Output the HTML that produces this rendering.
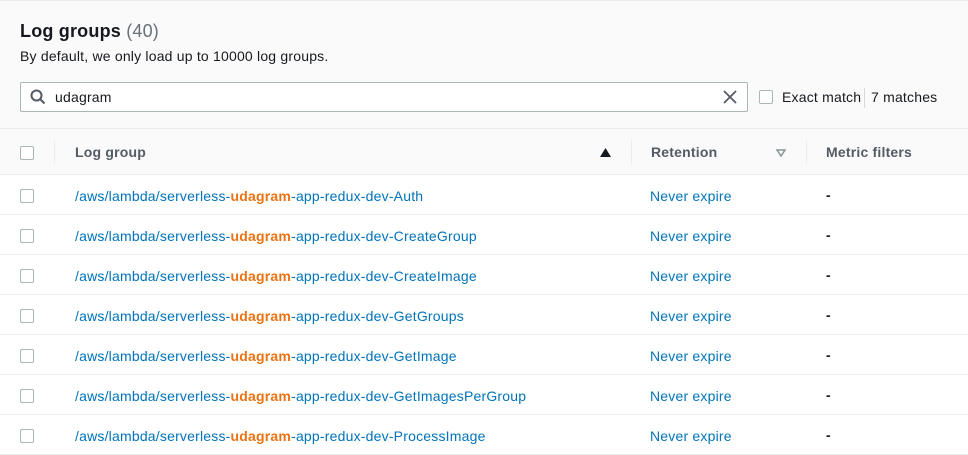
<!DOCTYPE html>
<html><head><meta charset="utf-8"><style>
*{box-sizing:border-box;margin:0;padding:0}
body{width:968px;height:454px;overflow:hidden;background:#fff;font-family:"Liberation Sans",Arial,sans-serif;color:#16191f;position:relative;letter-spacing:0.2px}
.top{position:absolute;left:0;top:0;width:968px;height:175px;background:#fafafa;border-top:1px solid #eaeded}
.abs{position:absolute;white-space:nowrap}
.title{left:20px;top:21px;font-size:18px;font-weight:bold}
.title span{font-weight:normal;color:#687078}
.sub{left:20px;top:48px;font-size:14px}
.search{left:20px;top:82px;width:728px;height:30px;background:#fff;border:1px solid #aab7b8;border-radius:2px}
.cb{width:14px;height:14px;border:1px solid #aab7b8;border-radius:2px;background:#fff;position:absolute}
.hline{position:absolute;left:0;width:968px;height:1px;background:#eaeded}
.vline{position:absolute;width:1px;height:24px;background:#eaeded;top:140px}
.th{font-size:14px;font-weight:bold;color:#545b64;top:144px}
.row{position:absolute;left:0;width:968px;height:40px;border-bottom:1px solid #eaeded;font-size:14px}
.row .cb{left:20px;top:14px}
.row .lg{position:absolute;left:75px;top:13px;color:#0073bb}
.row .lg b{color:#ec7211}
.row .ret{position:absolute;left:650px;top:13px;color:#0073bb}
.row .mf{position:absolute;left:826px;top:12px;font-weight:bold}
</style></head><body>
<div class="top"></div>
<div class="abs title">Log groups <span>(40)</span></div>
<div class="abs sub">By default, we only load up to 10000 log groups.</div>
<div class="abs search"></div>
<svg class="abs" style="left:30px;top:89px" width="16" height="16" viewBox="0 0 16 16"><circle cx="6.5" cy="6.5" r="5" fill="none" stroke="#545b64" stroke-width="2"/><path d="M10 10l4.5 4.5" stroke="#545b64" stroke-width="2"/></svg>
<div class="abs" style="left:55px;top:89px;font-size:14px">udagram</div>
<svg class="abs" style="left:723px;top:90px" width="14" height="14" viewBox="0 0 14 14"><path d="M1 1l12 12M13 1L1 13" stroke="#545b64" stroke-width="1.8"/></svg>
<div class="cb" style="left:759px;top:90px"></div>
<div class="abs" style="left:782px;top:89px;font-size:14px">Exact match</div>
<div class="abs" style="left:864px;top:88px;width:1px;height:20px;background:#d5dbdb"></div>
<div class="abs" style="left:871px;top:89px;font-size:14px">7 matches</div>
<div class="hline" style="top:128px"></div>
<div class="hline" style="top:174px"></div>
<div class="cb" style="left:20px;top:146px"></div>
<div class="vline" style="left:54px"></div>
<div class="abs th" style="left:75px">Log group</div>
<svg class="abs" style="left:600px;top:148px" width="11" height="9" viewBox="0 0 11 9"><path d="M0 9L5.5 0L11 9z" fill="#16191f"/></svg>
<div class="vline" style="left:631px"></div>
<div class="abs th" style="left:651px">Retention</div>
<svg class="abs" style="left:776px;top:149px" width="10" height="8" viewBox="0 0 10 8"><path d="M1 1h8L5 7z" fill="none" stroke="#879596" stroke-width="1.5"/></svg>
<div class="vline" style="left:806px"></div>
<div class="abs th" style="left:826px">Metric filters</div>

<div class="row" style="top:175px"><div class="cb"></div><div class="lg">/aws/lambda/serverless-<b>udagram</b>-app-redux-dev-Auth</div><div class="ret">Never expire</div><div class="mf">-</div></div>
<div class="row" style="top:215px"><div class="cb"></div><div class="lg">/aws/lambda/serverless-<b>udagram</b>-app-redux-dev-CreateGroup</div><div class="ret">Never expire</div><div class="mf">-</div></div>
<div class="row" style="top:255px"><div class="cb"></div><div class="lg">/aws/lambda/serverless-<b>udagram</b>-app-redux-dev-CreateImage</div><div class="ret">Never expire</div><div class="mf">-</div></div>
<div class="row" style="top:295px"><div class="cb"></div><div class="lg">/aws/lambda/serverless-<b>udagram</b>-app-redux-dev-GetGroups</div><div class="ret">Never expire</div><div class="mf">-</div></div>
<div class="row" style="top:335px"><div class="cb"></div><div class="lg">/aws/lambda/serverless-<b>udagram</b>-app-redux-dev-GetImage</div><div class="ret">Never expire</div><div class="mf">-</div></div>
<div class="row" style="top:375px"><div class="cb"></div><div class="lg">/aws/lambda/serverless-<b>udagram</b>-app-redux-dev-GetImagesPerGroup</div><div class="ret">Never expire</div><div class="mf">-</div></div>
<div class="row" style="top:415px"><div class="cb"></div><div class="lg">/aws/lambda/serverless-<b>udagram</b>-app-redux-dev-ProcessImage</div><div class="ret">Never expire</div><div class="mf">-</div></div>
</body></html>
